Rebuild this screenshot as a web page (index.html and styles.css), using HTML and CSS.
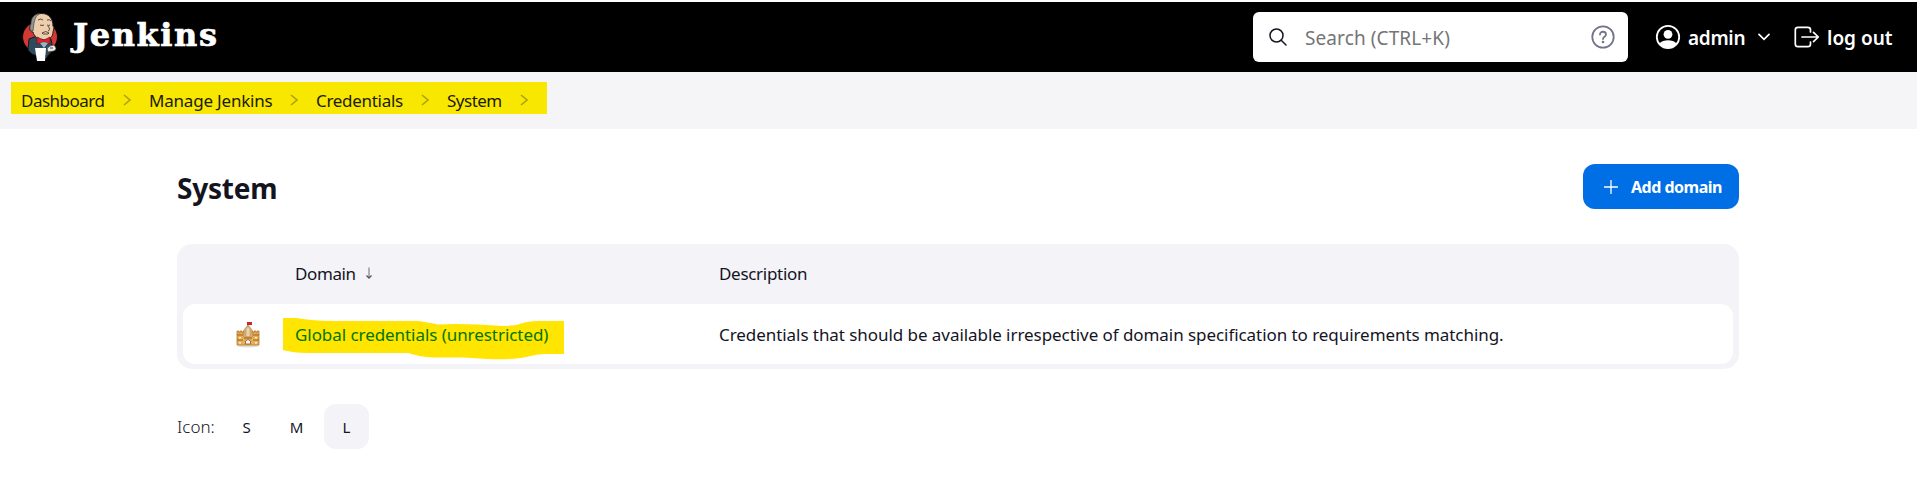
FILE: index.html
```html
<!DOCTYPE html>
<html lang="en">
<head>
<meta charset="utf-8">
<title>System - Jenkins</title>
<link rel="stylesheet" href="styles.css">
</head>
<body>
<header class="header">
  <a class="brand">
    <svg class="mascot" viewBox="0 0 36 50" width="36" height="50">
      <ellipse cx="18" cy="25" rx="17" ry="15.5" fill="#d33833"/>
      <path d="M7 27 L15 24 L29 27 L31 38 L23 47 L10 42 L6 38Z" fill="#2f4a5c" stroke="#10191f" stroke-width="1"/>
      <path d="M9 12C9 4 14 1.500 20 1.500C27 1.500 31 7 31 14C33 16 31 18 31 20C31 25 27 28 22 28C16 28 12 24 11 20C7 20 7 15 9 12Z" fill="#eccdac" stroke="#231f20" stroke-width="1"/>
      <path d="M9 12C9 6 12 2 18 1.500C13 4 13 8 12 11L11 19C8 19 7 15 9 12Z" fill="#929497" stroke="#333" stroke-width=".6"/>
      <path d="M16 8q3-2 5 0M25 8q3-1 4 1M18 13q2 1 4 0M25 13q2 1 3 0M26 14q3 4 0 5M20 21q4-3 7 0l-1 1h-5z" fill="none" stroke="#4b3a32" stroke-width=".9"/>
      <path d="M15 25l7 3 6-3v7l-6-2-7 2z" fill="#d9232e" stroke="#681318" stroke-width=".6"/>
      <path d="M18 31l4-1 4 1-4 5z" fill="#9cb6c6"/>
      <path d="M13 36h11l-1 13H15z" fill="#fff"/>
      <path d="M25 37q2-4 7-4q4 4 0 6l-6 1z" fill="#e9e9e9" stroke="#333" stroke-width=".7"/>
      <path d="M28 36h3M24 43v3" stroke="#444" stroke-width="1"/>
    </svg>
    <span class="brand-name">Jenkins</span>
  </a>
  <div class="search">
    <svg class="search-icon" viewBox="0 0 18 18" width="18" height="18"><circle cx="7.500" cy="7.500" r="6.500"/><path d="M12.200 12.200L17 17"/></svg>
    <span class="placeholder">Search (CTRL+K)</span>
    <svg class="help-icon" viewBox="0 0 24 24" width="24" height="24"><circle cx="12" cy="12" r="10.700"/><path d="M9 9.600C9 5.700 15 5.900 15 9.500C15 11.700 12 11.700 12 14"/><circle class="dot" cx="12" cy="17" r="1.300"/></svg>
  </div>
  <a class="user">
    <svg viewBox="0 0 26 26" width="26" height="26"><circle cx="13" cy="13" r="11.200" fill="none" stroke="#fff" stroke-width="1.800"/><circle cx="13" cy="10.300" r="4.400" fill="#fff"/><path d="M4.500 19.500C8 15.200 18 15.200 21.500 19.500C17 25.700 9 25.700 4.500 19.500Z" fill="#fff"/></svg>
    <span class="admin">admin</span>
    <svg viewBox="0 0 12 8" width="12" height="8"><path d="M1 1.300L6 6.300L11 1.300" fill="none" stroke="#fff" stroke-width="1.700" stroke-linecap="round"/></svg>
  </a>
  <a class="logout">
    <svg viewBox="0 0 26 22" width="26" height="22"><path d="M16.500 6V4Q16.500 1.300 13.800 1.300H4Q1.300 1.300 1.300 4V18Q1.300 20.700 4 20.700H13.800Q16.500 20.700 16.500 18V16M8 11H24M19.500 6.300L24.300 11L19.500 15.700" fill="none" stroke="#fff" stroke-width="1.700" stroke-linecap="round" stroke-linejoin="round"/></svg>
    <span class="logout-text">log out</span>
  </a>
</header>
<nav class="crumbs">
  <div class="trail">
    <span class="crumb dashboard">Dashboard</span>
    <svg class="chev" viewBox="0 0 8 12" width="8" height="12"><path d="M1 1L7 6L1 11"/></svg>
    <span class="crumb manage">Manage Jenkins</span>
    <svg class="chev" viewBox="0 0 8 12" width="8" height="12"><path d="M1 1L7 6L1 11"/></svg>
    <span class="crumb creds">Credentials</span>
    <svg class="chev" viewBox="0 0 8 12" width="8" height="12"><path d="M1 1L7 6L1 11"/></svg>
    <span class="crumb sys">System</span>
    <svg class="chev" viewBox="0 0 8 12" width="8" height="12"><path d="M1 1L7 6L1 11"/></svg>
  </div>
</nav>
<main class="main">
  <div class="bar">
    <h1 class="title">System</h1>
    <a class="add">
      <svg viewBox="0 0 14 14" width="14" height="14"><path d="M7 .5V13.500M.5 7H13.500" stroke="#fff" stroke-width="1.300" stroke-linecap="round"/></svg>
      <span class="add-text">Add domain</span>
    </a>
  </div>
  <section class="table">
    <div class="row head">
      <span class="icon-cell"></span>
      <span class="domain-cell"><span class="th-domain">Domain</span><svg class="sort" viewBox="0 0 8 12" width="8" height="12"><path d="M4 .5V10" stroke="#8b8b94" stroke-width="1.300"/><path d="M1.500 8.500L4 11L6.500 8.500" fill="none" stroke="#55555f" stroke-width="1.300"/></svg></span>
      <span class="th-desc">Description</span>
    </div>
    <div class="row body">
      <span class="icon-cell">
        <svg class="castle" viewBox="0 0 24 27" width="24" height="27">
          <ellipse cx="12" cy="25" rx="11" ry="1.500" fill="#ddd"/>
          <path d="M11.500 7V1" stroke="#a33" stroke-width="1"/>
          <path d="M12 1h4v3h-4z" fill="#d2232a"/>
          <path d="M8 17V9L12 4L16 9V17Z" fill="#cfa873" stroke="#b58443" stroke-width=".7"/>
          <path d="M1 24V10h2v2h1v-2h2v2h1v-2h1v6h8v-6h1v2h1v-2h2v2h1v-2h2v14Z" fill="#e5ae5a" stroke="#b57a2a" stroke-width=".8"/>
          <path d="M8 16V9L12 4L16 9V16Z" fill="#cfa873"/>
          <path d="M10.500 15V8L12 6L13.500 8V15Z" fill="#ead3ae"/>
          <path d="M1 14h6M17 14h6M1 19h6M17 19h6M8 17h8" stroke="#9b641d" stroke-width="1"/>
          <path d="M3 16h2v1.500H3zM19 16h2v1.500h-2zM3 21h2v1.500H3zM19 21h2v1.500h-2z" fill="#fff1cf"/>
          <path d="M9.500 23v-3q2.500-3 5 0v3z" fill="#fff" stroke="#a66b20" stroke-width="1"/>
        </svg>
      </span>
      <span class="domain-cell marked">
        <svg class="marker" viewBox="0 0 281 44" width="281" height="44"><path d="M0 0L13 0Q30 3 50 3H135Q143 4 155 6.500Q180 5 220 8Q232 8 240 5Q248 2.500 258 3H281V36H262Q255 36 243 39Q230 42 205 41L180 39.500H150Q138 39 125 35H25Q10 35 0 32Z"/></svg>
        <a class="link">Global credentials (unrestricted)</a>
      </span>
      <span class="desc">Credentials that should be available irrespective of domain specification to requirements matching.</span>
    </div>
  </section>
  <div class="sizes">
    <span class="sizes-label">Icon:</span>
    <a class="size">S</a>
    <a class="size">M</a>
    <a class="size active">L</a>
  </div>
</main>
</body>
</html>
```
FILE: styles.css
```css
* { box-sizing: border-box; }
body {
  margin: 0;
  padding-top: 2px;
  height: 486px;
  overflow: hidden;
  background: #fff;
  color: #14141f;
  font-family: "Noto Sans", "Open Sans", sans-serif;
  font-size: 17px;
  white-space: nowrap;
}
svg { display: block; flex: none; }
.header { display: flex; align-items: center; height: 70px; padding-left: 22px; background: #000; color: #fff; }
.brand { display: flex; align-items: center; width: 1231px; gap: 15px; }
.brand-name { padding-bottom: 4px; font: bold 32px "DejaVu Serif", serif; letter-spacing: 1.6px; -webkit-text-stroke: 0.7px #fff; }
.search { display: flex; align-items: center; width: 375px; height: 50px; padding: 0 13px 0 16px; border-radius: 6px; background: #fff; }
.search-icon { fill: none; stroke: #14141f; stroke-width: 1.5; stroke-linecap: round; }
.placeholder { flex: 1; padding-top: 2px; margin-left: 18px; color: #757575; font-size: 19px; letter-spacing: 0.1px; }
.help-icon { fill: none; stroke: #73738c; stroke-width: 1.8; stroke-linecap: round; }
.help-icon .dot { fill: #73738c; stroke: none; }
.user { display: flex; align-items: center; width: 139px; margin-left: 27px; }
.admin { width: 70px; padding-top: 2px; margin-left: 7px; font-size: 19px; font-weight: 600; letter-spacing: -0.3px; }
.logout { display: flex; align-items: center; gap: 7px; }
.logout-text { padding-top: 2px; font-size: 19px; font-weight: 600; }
.crumbs { height: 57px; padding: 10px 11px; background: #f5f5f8; }
.trail { display: flex; align-items: center; width: 536px; height: 32px; padding: 4px 0 0 10px; background: #f8e700; color: #1b1b09; }
.dashboard { width: 102px; letter-spacing: -0.5px; }
.manage { width: 141px; margin-left: 18px; letter-spacing: -0.2px; }
.creds { width: 105px; margin-left: 18px; letter-spacing: -0.3px; }
.sys { width: 73px; margin-left: 18px; letter-spacing: -0.5px; }
.chev { margin-top: -1px; fill: none; stroke: #aaa113; stroke-width: 1.6; }
.main { width: 1562px; margin: 35px 0 0 177px; }
.bar { display: flex; align-items: center; justify-content: space-between; height: 45px; }
.title { margin: 2px 0 0; font-size: 28px; font-weight: 700; letter-spacing: -0.2px; }
.add { display: flex; align-items: center; gap: 13px; width: 156px; height: 45px; padding-left: 21px; border-radius: 12px; background: #006fe6; color: #fff; }
.add-text { padding-top: 1px; font-size: 16px; font-weight: 700; letter-spacing: -0.5px; }
.table { height: 125px; margin-top: 35px; padding: 0 6px 5px; border-radius: 15px; background: #f3f3f8; }
.row { display: flex; align-items: center; height: 60px; }
.head { padding-bottom: 2px; }
.body { border-radius: 12px; background: #fff; }
.icon-cell { width: 112px; padding-left: 53px; }
.domain-cell { display: flex; align-items: center; width: 424px; }
.th-domain { letter-spacing: -0.4px; }
.th-desc { letter-spacing: -0.3px; }
.sort { margin-left: 9px; }
.marked { position: relative; }
.marker { position: absolute; left: -12px; top: -5px; fill: #ffe500; }
.link { position: relative; color: #007600; letter-spacing: -0.06px; }
.desc { letter-spacing: -0.06px; }
.sizes { display: flex; align-items: center; height: 45px; margin-top: 35px; }
.sizes-label { width: 47px; font-weight: 300; }
.size { display: flex; align-items: center; justify-content: center; width: 45px; height: 45px; margin-right: 5px; border-radius: 12px; font-size: 15px; }
.active { background: #f3f3f8; }
```
